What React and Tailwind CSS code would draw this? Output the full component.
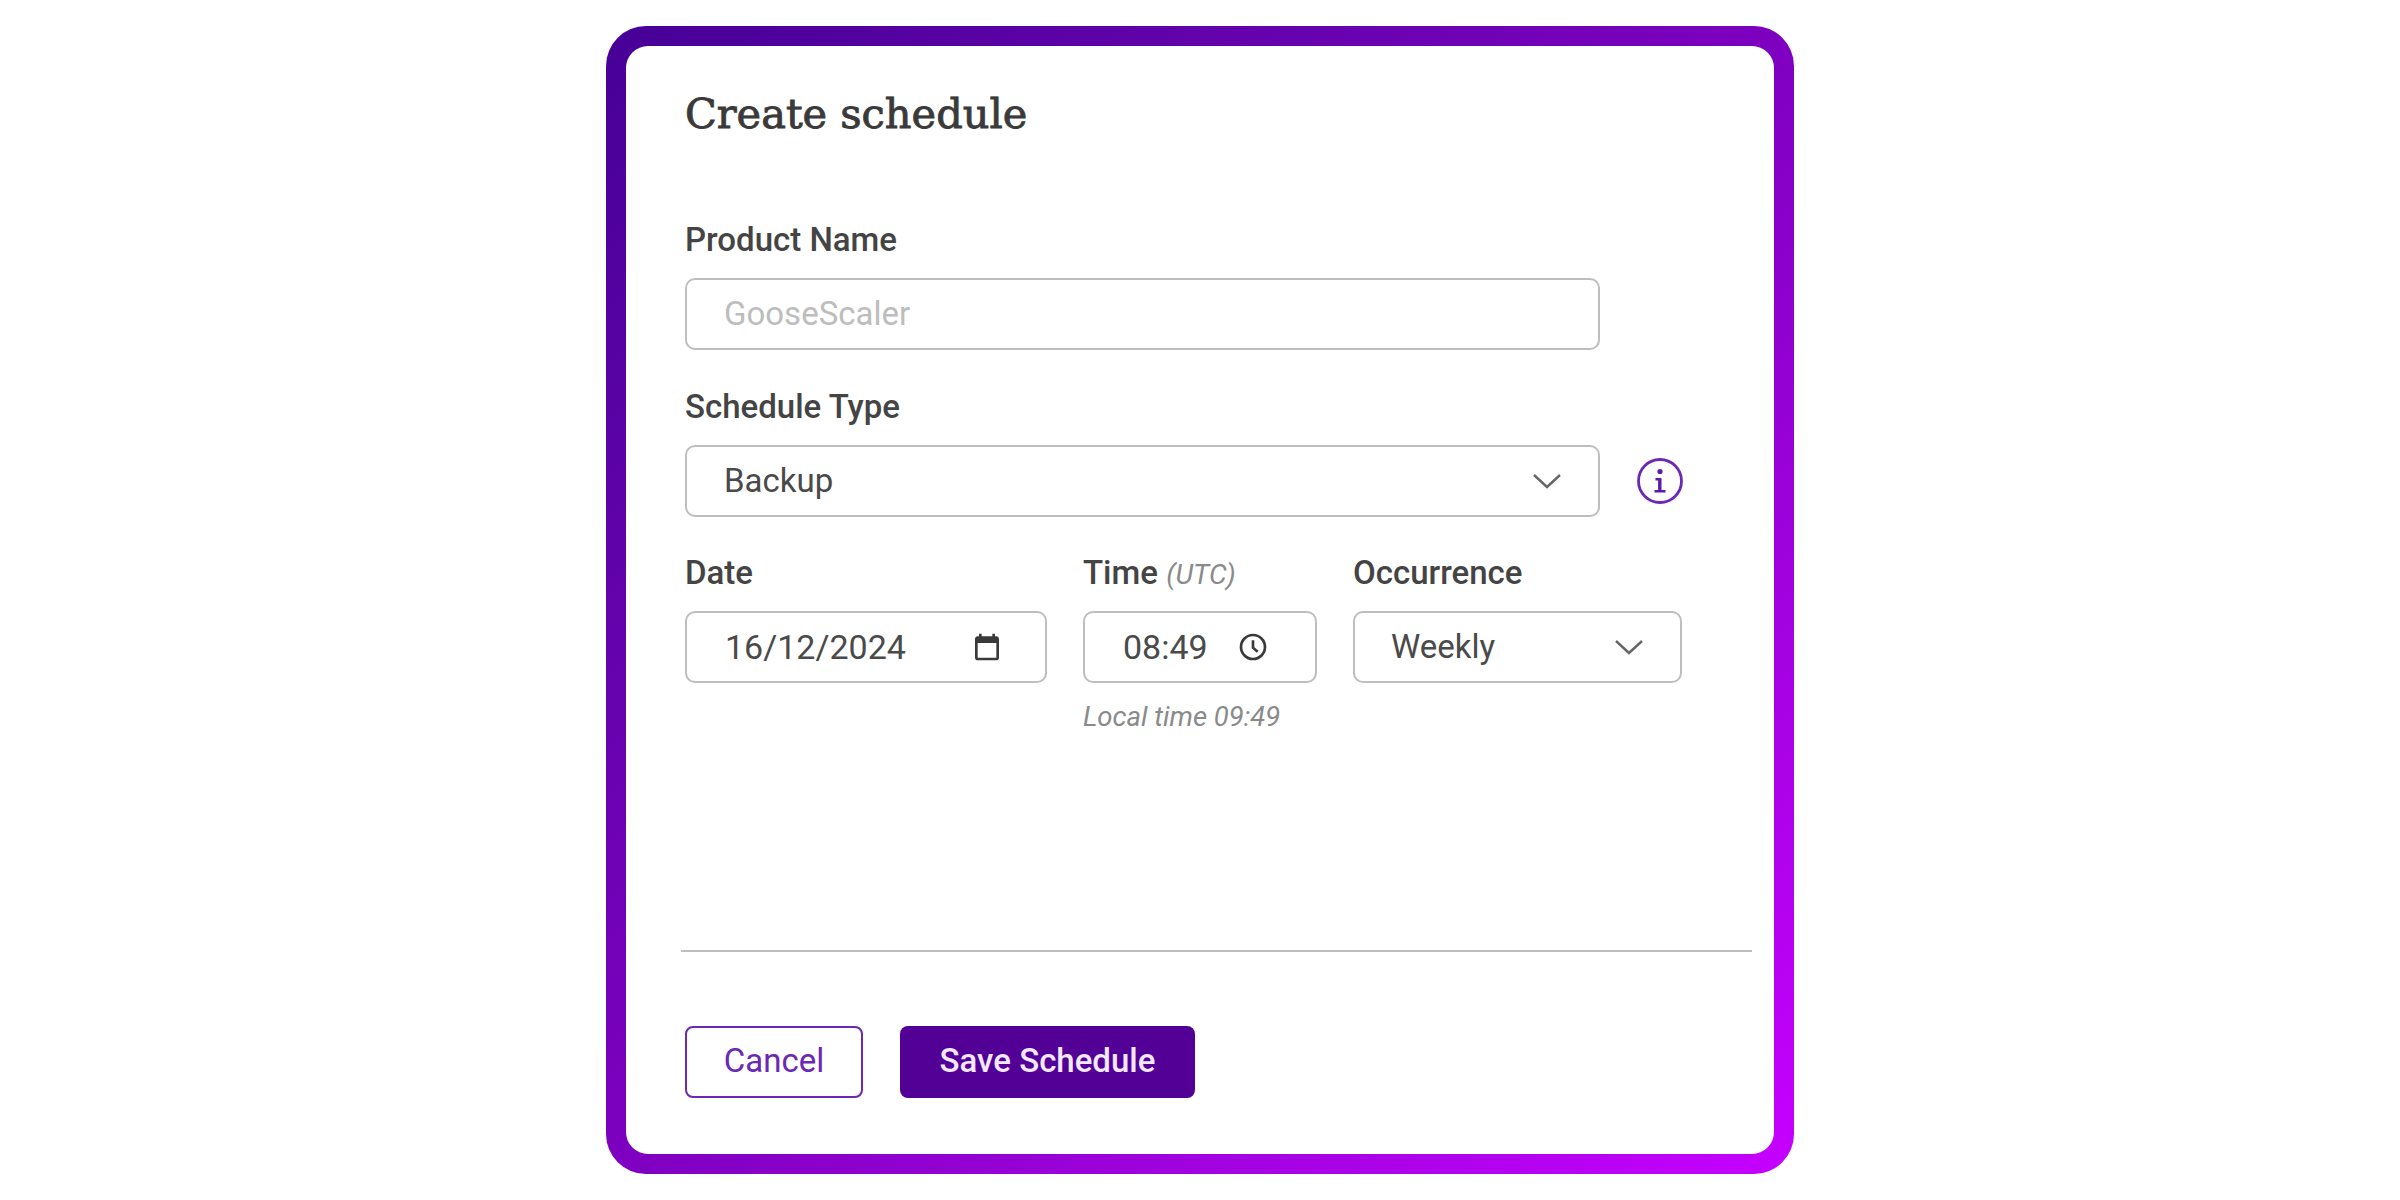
const roboto = "font-['Roboto',sans-serif]";

function Label({ children, className = '' }) {
  return <label className={`block text-[33px] leading-[36px] font-medium text-[#444444] ${className}`}>{children}</label>;
}

function Field({ children, className = '' }) {
  return (
    <div className={`flex h-[72px] items-center rounded-[10px] border-2 border-[#bebebe] bg-white text-[33px] text-[#4a4a4a] ${className}`}>
      {children}
    </div>
  );
}

function Chevron({ className = '' }) {
  return (
    <svg viewBox="0 0 30 18" className={`h-[18px] w-[30px] ${className}`} fill="none" stroke="#666666" strokeWidth="2.4">
      <path d="M2 3l13 12L28 3" />
    </svg>
  );
}

function InfoIcon() {
  return (
    <svg viewBox="0 0 46 46" className="h-[46px] w-[46px]" fill="none">
      <circle cx="23" cy="23" r="21.500" stroke="#6a28b5" strokeWidth="2.8" />
      <circle cx="23" cy="13.500" r="2.600" fill="#5b1aa8" />
      <path d="M18.500 20h6v12h4v2.600H17.500V32h3.600v-9.400h-2.600z" fill="#5b1aa8" />
    </svg>
  );
}

function CalendarIcon() {
  return (
    <svg viewBox="0 0 24 24" className="h-[32px] w-[32px]" fill="#3a3a3a">
      <path d="M19 4h-1V2h-2v2H8V2H6v2H5c-1.100 0-2 .9-2 2v14c0 1.100.9 2 2 2h14c1.100 0 2-.9 2-2V6c0-1.100-.9-2-2-2zm0 16H5V9h14v11z" />
    </svg>
  );
}

function ClockIcon() {
  return (
    <svg viewBox="0 0 24 24" className="h-[32px] w-[32px]" fill="none" stroke="#3a3a3a" strokeWidth="2">
      <circle cx="12" cy="12" r="9" />
      <path d="M12 7v5.500l3.500 3" />
    </svg>
  );
}

export default function App() {
  return (
    <div className={`flex min-h-screen justify-center bg-white pt-[26px] ${roboto}`}>
      <div className="h-[1148px] w-[1188px] rounded-[40px] bg-gradient-to-br from-[#460096] via-[#7e00c0] to-[#c600ff] p-5">
        <div className="flex h-full flex-col rounded-[22px] bg-white">
          <div className="px-[59px]">
            <h1 className="mt-[43px] font-['DejaVu_Serif',serif] text-[41.5px] leading-[50px] font-normal text-[#3a3a3a] [-webkit-text-stroke:0.9px_#3a3a3a]">Create schedule</h1>

            <Label className="mt-[83px]">Product Name</Label>
            <div className="mt-[20px] w-[915px]">
              <Field className="pl-[37px] text-[#bdbdbd]">GooseScaler</Field>
            </div>

            <Label className="mt-[39px]">Schedule Type</Label>
            <div className="mt-[20px] flex items-center gap-[37px]">
              <Field className="w-[915px] justify-between pr-[36px] pl-[37px]">
                Backup
                <Chevron />
              </Field>
              <InfoIcon />
            </div>

            <div className="mt-[38px] flex gap-[36px]">
              <div className="w-[362px]">
                <Label>Date</Label>
                <Field className="mt-[20px] justify-between pr-[42px] pl-[38px] text-[34px]">
                  16/12/2024
                  <CalendarIcon />
                </Field>
              </div>
              <div className="w-[234px]">
                <Label>
                  Time <span className="text-[28px] leading-none font-normal text-[#8a8a8a] italic">(UTC)</span>
                </Label>
                <Field className="mt-[20px] justify-between pr-[46px] pl-[38px] text-[34px]">
                  08:49
                  <ClockIcon />
                </Field>
                <p className="mt-[13px] text-[27.5px] text-[#8a8a8a] italic">Local time 09:49</p>
              </div>
              <div className="w-[329px]">
                <Label>Occurrence</Label>
                <Field className="mt-[20px] justify-between pr-[36px] pl-[36px]">
                  Weekly
                  <Chevron />
                </Field>
              </div>
            </div>
          </div>

          <div className="mt-auto ml-[55px] w-[1071px] border-t-2 border-[#bebebe]" />

          <div className="flex gap-[37px] px-[59px] pt-[74px] pb-[56px]">
            <button className="flex h-[72px] w-[178px] items-center justify-center rounded-[8px] border-2 border-[#6a28b5] bg-white pb-[3px] text-[33px] text-[#6a28b5]">
              Cancel
            </button>
            <button className="flex h-[72px] w-[295px] items-center justify-center rounded-[8px] bg-[#520096] pb-[3px] text-[33px] font-medium text-[#f3e8ff]">
              Save Schedule
            </button>
          </div>
        </div>
      </div>
    </div>
  );
}
